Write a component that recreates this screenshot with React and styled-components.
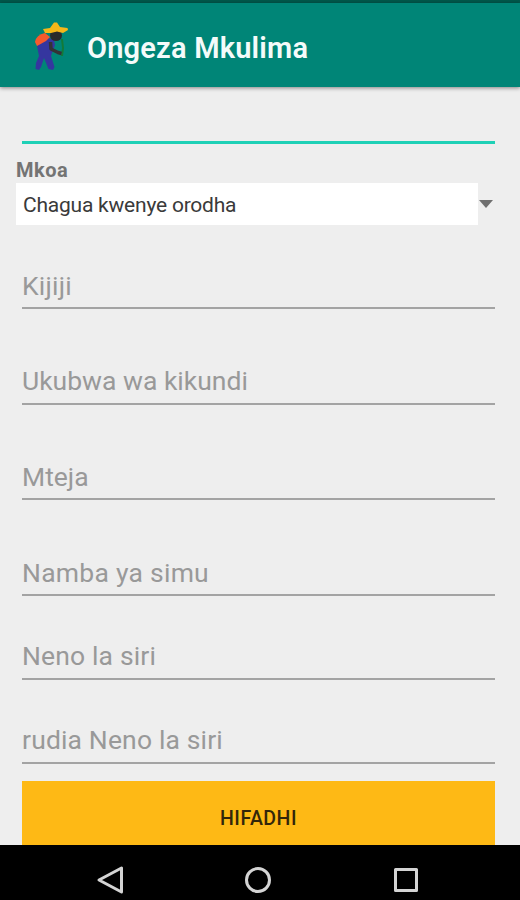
import React from "react";
import styled, { createGlobalStyle } from "styled-components";

const GlobalStyle = createGlobalStyle`
  * {
    box-sizing: border-box;
  }

  body {
    margin: 0;
    background-color: #eeeeee;
    font-family: Roboto, "Liberation Sans", sans-serif;
  }
`;

const Screen = styled.div`
  display: flex;
  flex-direction: column;
  width: 520px;
  height: 900px;
  overflow: hidden;
  background-color: #eeeeee;
`;

const StatusBar = styled.div`
  flex: none;
  height: 3px;
  background-color: #00584b;
`;

const Toolbar = styled.header`
  flex: none;
  display: flex;
  align-items: center;
  height: 84px;
  padding: 4px 0 0 32px;
  background-color: #008577;
  box-shadow: 0 1px 4px rgba(0, 0, 0, 0.45);
`;

const Title = styled.h1`
  margin: 2px 0 0 17px;
  font-size: 29px;
  line-height: 36px;
  font-weight: 600;
  letter-spacing: 0.2px;
  color: #f4fbfa;
`;

const Form = styled.form`
  flex: 1;
  min-height: 0;
  overflow: hidden;
  display: flex;
  flex-direction: column;
`;

const Field = styled.label`
  flex: none;
  display: flex;
  flex-direction: column;
  justify-content: flex-end;
  height: ${(props) => props.$height}px;
  margin: 0 25px 0 22px;
  padding-bottom: ${(props) => props.$gap || 6}px;
  border-bottom: ${(props) => (props.$active ? "3px" : "2px")} solid
    ${(props) => (props.$active ? "#1fd0b6" : "#a3a3a3")};
  font-size: 26.5px;
  line-height: 32px;
  letter-spacing: ${(props) => props.$spacing || 0}px;
  color: #999999;
`;

const SelectLabel = styled.div`
  flex: none;
  margin: 14px 0 0 16px;
  height: 25px;
  font-size: 20px;
  line-height: 25px;
  font-weight: 700;
  letter-spacing: 0.5px;
  color: #747474;
`;

const SelectRow = styled.div`
  flex: none;
  display: flex;
  align-items: center;
  height: 42px;
  padding-left: 16px;
`;

const SelectValue = styled.div`
  width: 462px;
  height: 42px;
  padding-left: 7px;
  background-color: #ffffff;
  font-size: 21px;
  line-height: 44px;
  letter-spacing: -0.22px;
  color: #3a3a3a;
`;

const Arrow = styled.svg`
  width: 14px;
  height: 8px;
  margin-left: 1px;
`;

const SaveButton = styled.button`
  flex: none;
  height: 74px;
  margin: 17px 25px 0 22px;
  padding: 0;
  border: none;
  background-color: #feb915;
  font-family: inherit;
  font-size: 19.5px;
  font-weight: 500;
  letter-spacing: 0.5px;
  color: #33260a;
`;

const NavBar = styled.nav`
  flex: none;
  display: flex;
  align-items: center;
  justify-content: space-between;
  height: 55px;
  padding: 14px 99px 0 95px;
  background-color: #000000;
`;

const NavIcon = styled.svg`
  width: 30px;
  height: 30px;
  fill: none;
  stroke: #d4d4d4;
  stroke-width: 3;
  stroke-linejoin: round;
`;

const fields = [
  { label: "Kijiji", height: 84, spacing: 0.2, gap: 5 },
  { label: "Ukubwa wa kikundi", height: 96, spacing: 0 },
  { label: "Mteja", height: 95, spacing: 0, gap: 5 },
  { label: "Namba ya simu", height: 96, spacing: 0.25, gap: 5 },
  { label: "Neno la siri", height: 84, spacing: 0.15 },
  { label: "rudia Neno la siri", height: 84, spacing: 0.15 },
];

// farmer with a straw hat, a basket on the back and a green plant in hand
function FarmerLogo() {
  return (
    <svg width="38" height="50" viewBox="0 0 38 50">
      <path d="M30 17 L31 26 L30 34" stroke="#137a37" strokeWidth="2" fill="none" />
      <path
        d="M5 24 Q8 18 16 16 L22 18 L23 23 L20 31 L19 34 L22.5 45 L21 48 L16.5 47 L12 36 L9 45 L7 48 L3.5 47 L4 41 L7 34 Z"
        fill="#35369f"
      />
      <path d="M3 20 Q4 13 13 11 L18 15 L14 19 L5 24 Z" fill="#f65a2c" />
      <ellipse cx="24" cy="13.5" rx="6" ry="5.5" fill="#292a2b" />
      <path
        d="M18.5 20 L19 27 L26 30.5 L29.5 31.5"
        stroke="#353235"
        strokeWidth="3.5"
        strokeLinejoin="round"
        fill="none"
      />
      <path
        d="M11 7 L18 6 L22 0.5 L25 0.5 L28 5 L35.5 6 L36 8 L31 11 L25 9.5 L19 11 L13 11 Z"
        fill="#f5b719"
      />
    </svg>
  );
}

export default function App() {
  return (
    <>
      <GlobalStyle />
      <Screen>
        <StatusBar />
        <Toolbar>
          <FarmerLogo />
          <Title>Ongeza Mkulima</Title>
        </Toolbar>
        <Form>
          <Field $height={57} $active />
          <SelectLabel>Mkoa</SelectLabel>
          <SelectRow>
            <SelectValue>Chagua kwenye orodha</SelectValue>
            <Arrow viewBox="0 0 14 8">
              <path d="M0 0 H14 L7 8 Z" fill="#6f6f6f" />
            </Arrow>
          </SelectRow>
          {fields.map((field) => (
            <Field
              key={field.label}
              $height={field.height}
              $spacing={field.spacing}
              $gap={field.gap}
            >
              {field.label}
            </Field>
          ))}
          <SaveButton type="button">HIFADHI</SaveButton>
        </Form>
        <NavBar>
          <NavIcon viewBox="0 0 30 30">
            <path d="M4 15 L26.5 3 V27 Z" />
          </NavIcon>
          <NavIcon viewBox="0 0 30 30">
            <circle cx="15" cy="15" r="11.5" />
          </NavIcon>
          <NavIcon viewBox="0 0 30 30">
            <rect x="4.5" y="4.5" width="21" height="21" />
          </NavIcon>
        </NavBar>
      </Screen>
    </>
  );
}
